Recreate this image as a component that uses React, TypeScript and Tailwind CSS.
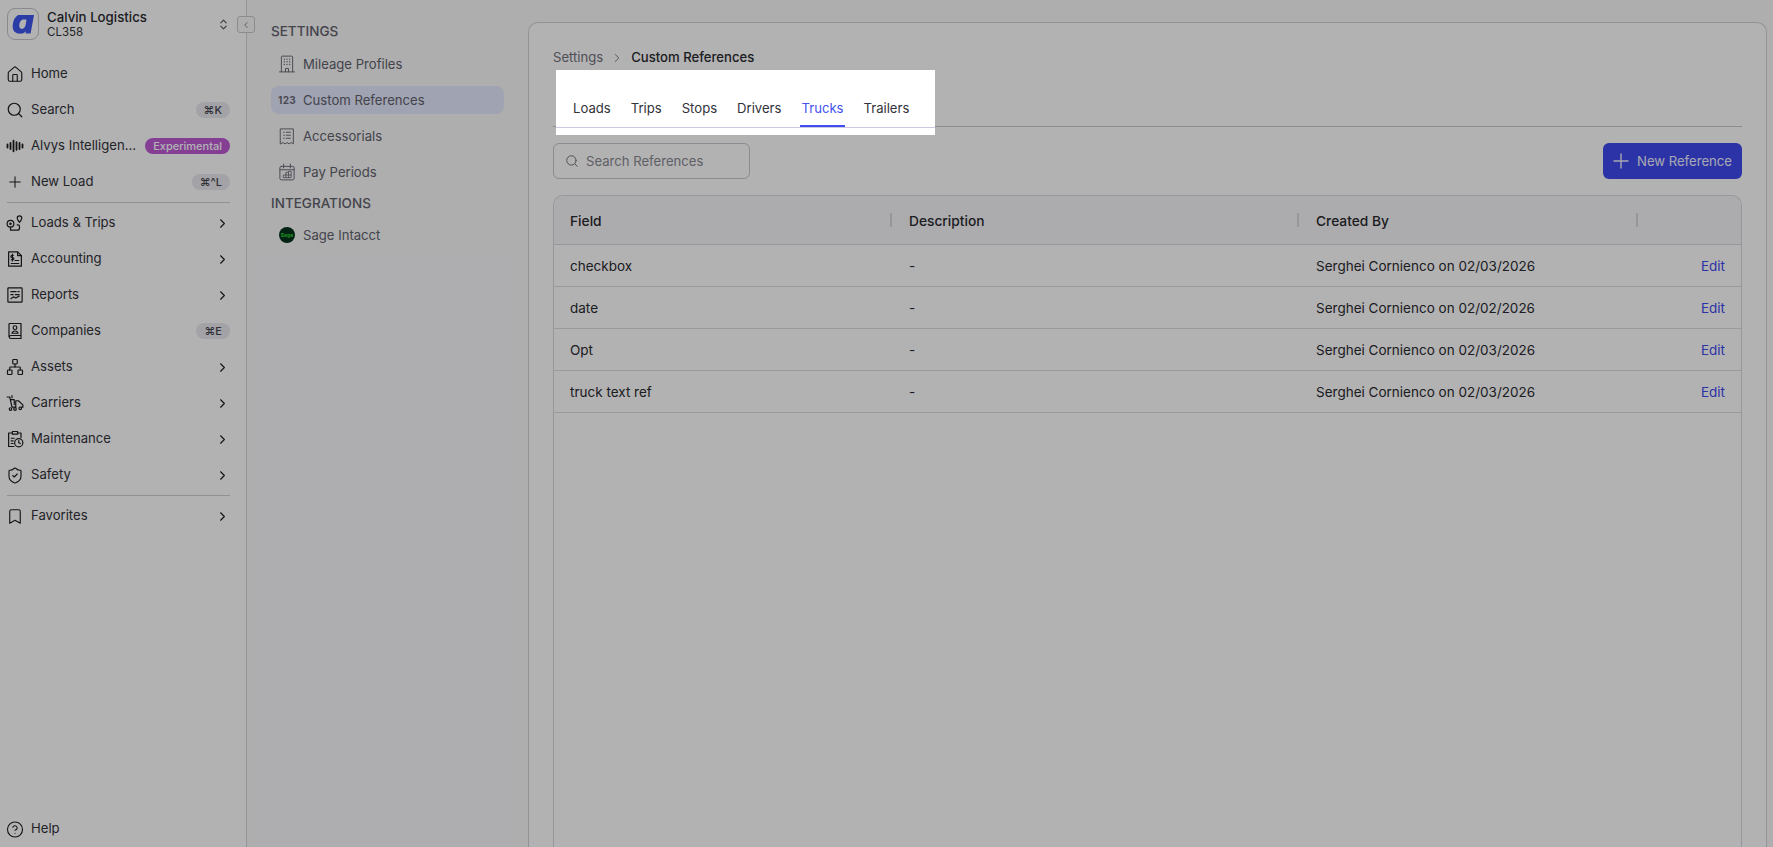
import {
  Bookmark,
  ChevronLeft,
  ChevronRight,
  ChevronsUpDown,
  CircleHelp,
  House,
  Network,
  Plus,
  Search,
  ShieldCheck,
} from "lucide-react";
import type { ReactNode } from "react";

const iconProps = { width: 18, height: 18, viewBox: "0 0 24 24", fill: "none", stroke: "currentColor", strokeWidth: 1.6, strokeLinecap: "round" as const, strokeLinejoin: "round" as const };

function WaveIcon() {
  return (
    <svg {...iconProps}>
      <path d="M2 10v4M6 8v8M10 5v14M14 7v10M18 8v8M22 10v4" strokeWidth={2.4} />
    </svg>
  );
}

function RouteIcon() {
  return (
    <svg {...iconProps}>
      <circle cx="6" cy="13" r="4.500" />
      <circle cx="6" cy="13" r="1" />
      <path d="M6 17.500v4h9a3 3 0 0 0 3-3v-2a2 2 0 0 0-2-2h-1" />
      <path d="M18 11c-2-2.400-3-4-3-5.500a3 3 0 0 1 6 0c0 1.500-1 3.100-3 5.500z" />
    </svg>
  );
}

function AccountingIcon() {
  return (
    <svg {...iconProps}>
      <path d="M3.500 2.500h12l5 5v14h-17z" />
      <path d="M15.500 2.500v5h5M7 18h10M12 14h5M10 7H8a1.300 1.300 0 0 0 0 3h1a1.300 1.300 0 0 1 0 3H7M8.500 5.500v9" />
    </svg>
  );
}

function ReportsIcon() {
  return (
    <svg {...iconProps}>
      <rect x="2.500" y="2.500" width="19" height="19" rx="1" />
      <path d="M6.500 7.500h7M16 7.500h1.500M6.500 11.500h3M12.500 11.500h5M6.500 17l3.500-2.500 3 1.500 4.500-2.500" />
    </svg>
  );
}

function CompaniesIcon() {
  return (
    <svg {...iconProps}>
      <path d="M4 19.500V3a1 1 0 0 1 1-1h15v16H6.500a2 2 0 0 0 0 4H20v-4" />
      <circle cx="12" cy="7.500" r="2.500" />
      <path d="M8 15c.4-2 2-3 4-3s3.600 1 4 3z" />
    </svg>
  );
}

function CarriersIcon() {
  return (
    <svg {...iconProps}>
      <path d="M1.500 4H5l3 13.500h5M5.500 7.500h5.500v6.500M8 2v3" />
      <path d="M13 9h3.500l6 5.500v3h-2M13 9v8.500" />
      <circle cx="6" cy="20" r="1.700" />
      <circle cx="12" cy="20" r="1.700" />
      <circle cx="19" cy="19" r="1.700" />
    </svg>
  );
}

function MaintenanceIcon() {
  return (
    <svg {...iconProps}>
      <path d="M8.500 2h7v3.500h-7zM8.500 4H3.500v18h7M15.500 4h4.500v6" />
      <path d="M7 11h4M7 14.500h2.500M7 18h2.500" />
      <circle cx="17" cy="17" r="5.500" />
      <path d="M17 14v3l2 1" />
    </svg>
  );
}

function BuildingIcon() {
  return (
    <svg {...iconProps} strokeWidth={1.3}>
      <path d="M2 22.500h20M4.500 22.500V2.500a1 1 0 0 1 1-1h13a1 1 0 0 1 1 1v20M10 22.500V18h4v4.500" />
      <path d="M8.500 5.500h.01M12 5.500h.01M15.500 5.500h.01M8.500 9h.01M12 9h.01M15.500 9h.01M8.500 12.500h.01M12 12.500h.01M15.500 12.500h.01" strokeWidth={1.800} />
    </svg>
  );
}

function ReceiptIcon() {
  return (
    <svg {...iconProps} strokeWidth={1.3}>
      <path d="M3.500 2.500h17v20l-3-1.800-2.800 1.800-2.700-1.800-2.700 1.800-2.800-1.800-3 1.800z" />
      <path d="M7.500 7h1M11 7h5.500M7.500 11h1M11 11h5.500M7.500 15h1M11 15h5.500" />
    </svg>
  );
}

function PayPeriodIcon() {
  return (
    <svg {...iconProps} strokeWidth={1.3}>
      <rect x="2.500" y="4.500" width="19" height="18" rx="2" />
      <path d="M7.500 1.500v5M16.500 1.500v5M2.500 9h19" />
      <path d="M7 19v-3h3.500v-3.500H14V11h3.500v8zM10.500 16v3M14 12.500V19M10.500 16H17.500" strokeWidth={1.100} />
    </svg>
  );
}

function SageLogo() {
  return (
    <span className="flex h-4 w-4 items-center justify-center rounded-full bg-[#04331c] text-[5px] font-bold leading-none text-[#2fd32f]">
      Sage
    </span>
  );
}

function AlvysLogo() {
  return (
    <div className="flex h-8 w-8 shrink-0 items-center justify-center rounded-lg border border-[#c4c4cc] bg-white">
      <svg width="24" height="22" viewBox="0 0 24 22" fill="none">
        <path
          d="M7.500 2h15.500l-3.400 18.500h-5l.4-2.200c-1.400 1.600-3.100 2.400-5.200 2.400C4.300 20.700 1.300 18 1.700 12.500 2.200 6.800 4.400 3.300 7.500 2zm4.800 4.600c-1.900 0-3.600 2-4 5-.3 2.800.7 4.400 2.600 4.400 2 0 3.500-1.900 3.900-4.900l.7-4.500z"
          fill="#4057ee"
          fillRule="evenodd"
        />
      </svg>
    </div>
  );
}

function Kbd({ children }: { children: ReactNode }) {
  return (
    <span className="rounded-full bg-[#e9e9f0] px-2 py-[1px] text-[11px] font-medium leading-[14px] text-[#44444c]">
      {children}
    </span>
  );
}

function NavRow({ icon, label, right }: { icon: ReactNode; label: string; right?: ReactNode }) {
  return (
    <div className="flex h-9 items-center text-[#1d1d22]">
      <span className="-ml-px flex w-[18px] shrink-0 items-center justify-center">{icon}</span>
      <span className="ml-[7px] flex-1 whitespace-nowrap text-[13.125px] text-[#33333a]">{label}</span>
      {right}
    </div>
  );
}

const arrow = <ChevronRight size={15} strokeWidth={1.8} />;

function Sidebar() {
  return (
    <aside className="relative flex h-full w-[247px] shrink-0 flex-col border-r border-[#d4d4da] bg-white pl-[7px] pr-[16px]">
      <div className="mt-[8px] flex items-center">
        <AlvysLogo />
        <div className="ml-[8px] flex-1 leading-none">
          <div className="text-[13.250px] font-medium leading-[17px] text-[#2a2a30]">Calvin Logistics</div>
          <div className="text-[11.500px] leading-[13px] text-[#33333a]">CL358</div>
        </div>
        <ChevronsUpDown size={13} className="text-[#55555c]" />
      </div>
      <div className="mt-[16px]">
        <NavRow icon={<House size={19} strokeWidth={1.5} />} label="Home" />
        <NavRow icon={<Search size={18} strokeWidth={1.6} />} label="Search" right={<Kbd>⌘K</Kbd>} />
        <NavRow
          icon={<WaveIcon />}
          label="Alvys Intelligen..."
          right={
            <span className="rounded-full bg-[#bd5bd6] px-2 text-[11px] font-medium leading-[16px] text-white">
              Experimental
            </span>
          }
        />
        <NavRow icon={<Plus size={20} strokeWidth={1.4} />} label="New Load" right={<Kbd>⌘^L</Kbd>} />
      </div>
      <div className="my-[2px] border-t border-[#d0d0d6]" />
      <NavRow icon={<RouteIcon />} label="Loads & Trips" right={arrow} />
      <NavRow icon={<AccountingIcon />} label="Accounting" right={arrow} />
      <NavRow icon={<ReportsIcon />} label="Reports" right={arrow} />
      <NavRow icon={<CompaniesIcon />} label="Companies" right={<Kbd>⌘E</Kbd>} />
      <NavRow icon={<Network size={18} strokeWidth={1.6} />} label="Assets" right={arrow} />
      <NavRow icon={<CarriersIcon />} label="Carriers" right={arrow} />
      <NavRow icon={<MaintenanceIcon />} label="Maintenance" right={arrow} />
      <NavRow icon={<ShieldCheck size={19} strokeWidth={1.5} />} label="Safety" right={arrow} />
      <div className="my-[2px] border-t border-[#d0d0d6]" />
      <NavRow icon={<Bookmark size={19} strokeWidth={1.5} />} label="Favorites" right={arrow} />
      <div className="mt-auto">
        <NavRow icon={<CircleHelp size={19} strokeWidth={1.5} />} label="Help" />
      </div>
      <button className="absolute left-[237px] top-[16px] flex h-[17px] w-[18px] items-center justify-center rounded-[3px] border border-[#c8c8ce] bg-[#f9f9fb] text-[#77777f]">
        <ChevronLeft size={10} />
      </button>
    </aside>
  );
}

function SubRow({ icon, label, active }: { icon: ReactNode; label: string; active?: boolean }) {
  return (
    <div className={`flex h-[28px] items-center rounded-lg pl-[7px] ${active ? "bg-[#e5eaff]" : ""}`}>
      <span className="flex w-[18px] shrink-0 items-center justify-center text-[#6b6b76]">{icon}</span>
      <span className="ml-[7px] mt-[2px] text-[13.125px] text-[#62626c]">{label}</span>
    </div>
  );
}

function SettingsNav() {
  return (
    <nav className="w-[281px] shrink-0 pl-[24px] pr-[24px] pt-[22px]">
      <div className="text-[13.500px] font-medium leading-[18px] text-[#62626c]">SETTINGS</div>
      <div className="mt-[10px] flex flex-col gap-2">
        <SubRow icon={<BuildingIcon />} label="Mileage Profiles" />
        <SubRow
          active
          icon={<span className="text-[10px] font-bold tracking-[0.3px] text-[#6b6b76]">123</span>}
          label="Custom References"
        />
        <SubRow icon={<ReceiptIcon />} label="Accessorials" />
        <SubRow icon={<PayPeriodIcon />} label="Pay Periods" />
      </div>
      <div className="mt-[8px] text-[13.500px] font-medium leading-[18px] text-[#62626c]">INTEGRATIONS</div>
      <div className="mt-[9px]">
        <SubRow icon={<SageLogo />} label="Sage Intacct" />
      </div>
    </nav>
  );
}

const tabs = ["Loads", "Trips", "Stops", "Drivers", "Trucks", "Trailers"];

const rows = [
  { field: "checkbox", date: "02/03/2026" },
  { field: "date", date: "02/02/2026" },
  { field: "Opt", date: "02/03/2026" },
  { field: "truck text ref", date: "02/03/2026" },
];

function ColDivider() {
  return <span className="absolute right-0 top-[15px] h-[14px] w-[2px] bg-[#d8d8de]" />;
}

function ReferencesCard() {
  return (
    <main className="mr-[6px] mt-[22px] flex min-w-0 flex-1 flex-col rounded-t-[10px] border border-b-0 border-[#d2d2d8] bg-white px-[24px]">
      <div className="mt-[26px] flex h-[18px] items-center text-[13.125px] leading-none">
        <span className="text-[#72727c]">Settings</span>
        <ChevronRight size={14} strokeWidth={1.6} className="mx-[7px] text-[#72727c]" />
        <span className="font-medium text-[#2a2a30]">Custom References</span>
      </div>

      {/* highlighted tab strip sits on top of the dim layer */}
      <div className="mt-[3px] h-[57px] border-b border-[#c9c9d0]">
        <div className="relative z-20 ml-[3px] h-[65px] w-[379px] bg-white">
          <span className="absolute bottom-[7px] left-0 right-0 h-px bg-[#c9c9e0]" />
          <div className="flex gap-[20px] pl-[17px] pt-[29px]">
            {tabs.map((t) => (
              <div
                key={t}
                className={`relative h-[28px] text-[13.125px] leading-[18px] ${t === "Trucks" ? "text-[#4353ee]" : "text-[#33333a]"}`}
              >
                {t}
                {t === "Trucks" && <span className="absolute -left-px -right-px bottom-0 h-[2px] bg-[#3f4cf0]" />}
              </div>
            ))}
          </div>
        </div>
      </div>

      <div className="mt-[16px] flex items-center justify-between">
        <div className="flex h-[36px] w-[197px] items-center rounded-md border border-[#c8c8d0] pl-[11px]">
          <Search size={14} strokeWidth={1.7} className="text-[#72727c]" />
          <span className="ml-[7px] mt-[2px] text-[13.125px] text-[#8a8a94]">Search References</span>
        </div>
        <button className="flex h-[36px] w-[139px] items-center gap-[4px] rounded-md bg-[#3f4af0] pl-[6px] text-[13.125px] text-[#f0f0ff]">
          <Plus size={24} strokeWidth={1.4} />
          <span className="mt-[2px]">New Reference</span>
        </button>
      </div>

      <div className="mt-[16px] flex-1 rounded-t-[10px] border border-b-0 border-[#d8d8de]">
        <div className="flex h-[49px] items-center rounded-t-[10px] border-b border-[#d8d8de] bg-[#f7f7fa] pt-[2px] text-[13.750px] font-medium text-[#2a2a30]">
          <div className="relative flex h-full w-[338px] items-center pl-[16px]">
            Field
            <ColDivider />
          </div>
          <div className="relative flex h-full w-[407px] items-center pl-[17px]">
            Description
            <ColDivider />
          </div>
          <div className="relative flex h-full w-[339px] items-center pl-[17px]">
            Created By
            <ColDivider />
          </div>
        </div>
        {rows.map((r) => (
          <div key={r.field} className="flex h-[42px] items-center border-b border-[#dcdce2] pt-[2px] text-[13.500px] text-[#2a2a30]">
            <div className="w-[338px] pl-[16px]">{r.field}</div>
            <div className="w-[407px] pl-[17px]">-</div>
            <div className="w-[339px] pl-[17px]">Serghei Cornienco on {r.date}</div>
            <div className="flex-1 pr-[16px] text-right text-[#3f4af0]">Edit</div>
          </div>
        ))}
      </div>
    </main>
  );
}

export default function App() {
  return (
    <div className="relative flex h-screen overflow-hidden bg-[#f9f9fb] font-['Inter',sans-serif]">
      <Sidebar />
      <SettingsNav />
      <ReferencesCard />
      <div className="absolute inset-0 z-10 bg-black/30" />
    </div>
  );
}
